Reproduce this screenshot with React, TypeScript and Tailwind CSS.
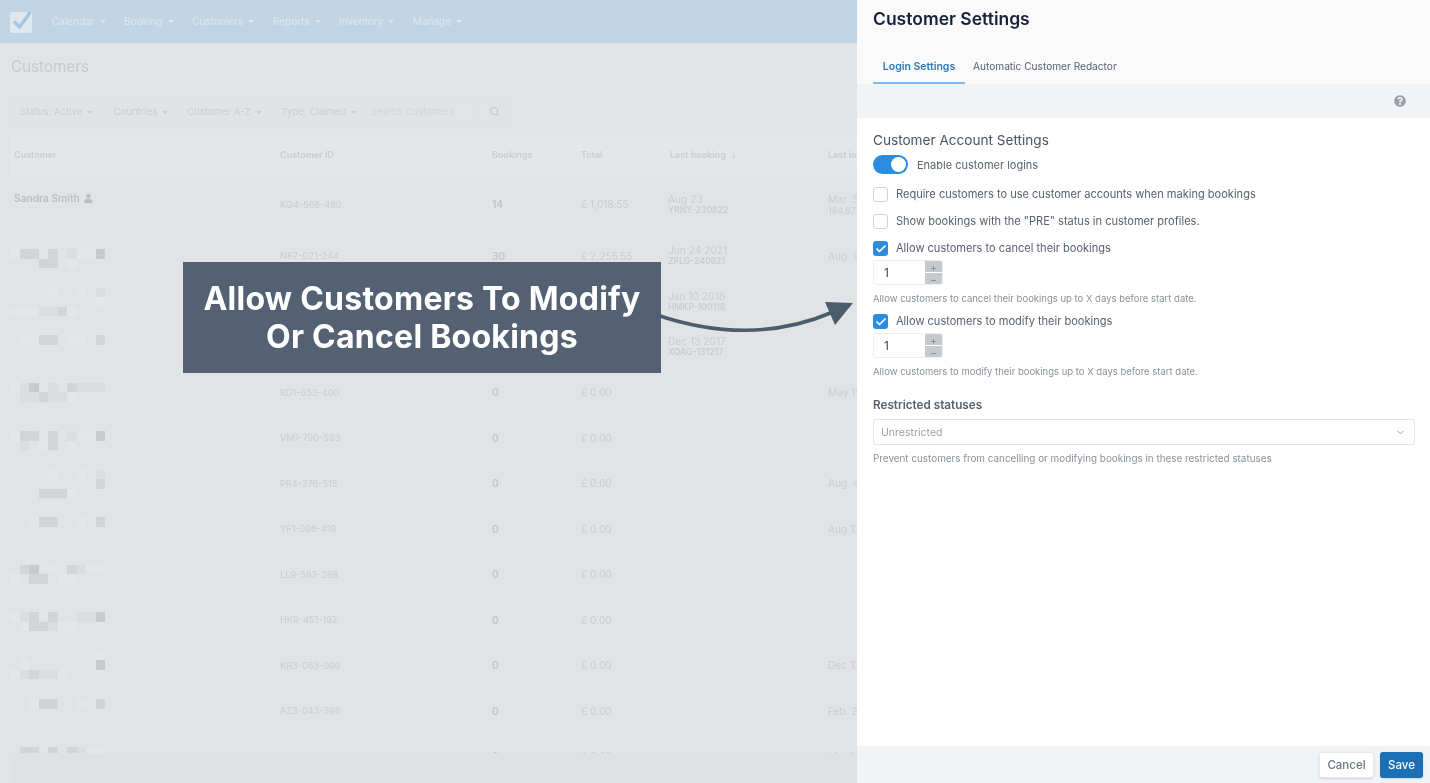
import { Search, ChevronDown, ArrowDown, Check } from 'lucide-react';
import { FaUser, FaQuestionCircle } from 'react-icons/fa';

const navItems = ['Calendar', 'Booking', 'Customers', 'Reports', 'Inventory', 'Manage'];
const filters = [
  { label: 'Status: Active', width: 'w-[90px]' },
  { label: 'Countries', width: 'w-[70px]' },
  { label: 'Customer A-Z', width: 'w-[91px]' },
  { label: 'Type: Claimed', width: 'w-[90px]' },
];

// digit = how dark the censored cell is
const shades: Record<string, string> = {
  '0': 'bg-transparent',
  '1': 'bg-[#e5e6e9]',
  '2': 'bg-[#dcdde0]',
  '3': 'bg-[#d3d4d7]',
  '4': 'bg-[#c9cacd]',
};

const rows = [
  { top: 'pt-[14px]', mask: ['1330302114', '0003301000'], id: 'NK7-021-244', count: '30', total: '£ 2,255.55', date: 'Jun 24 2021', ref: 'ZPLG-240621', login: 'Aug  9' },
  { top: 'pt-[7px]', mask: ['0000100102', '0000000001', '1112231000'], id: '', count: '', total: '', date: 'Jan 10 2018', ref: 'HMKP-100118', login: '' },
  { top: 'pt-[9px]', mask: ['0113301103'], id: '', count: '2', total: '£ 138.65', date: 'Dec 13 2017', ref: 'XQAG-131217', login: '' },
  { top: 'pt-[11px]', mask: ['1240203222', '0223221000'], id: 'RD1-653-400', count: '0', total: '£ 0.00', date: '', ref: '', login: 'May 15' },
  { top: 'pt-[14px]', mask: ['1330302114', '0201301000'], id: 'VM1-790-593', count: '0', total: '£ 0.00', date: '', ref: '', login: '' },
  { top: 'pt-[7px]', mask: ['0000100102', '0000000003', '0003331000'], id: 'PR4-376-515', count: '0', total: '£ 0.00', date: '', ref: '', login: 'Aug  4' },
  { top: 'pt-[9px]', mask: ['0013300103'], id: 'YF1-098-419', count: '0', total: '£ 0.00', date: '', ref: '', login: 'Aug 13' },
  { top: 'pt-[11px]', mask: ['0340103211', '1033011000'], id: 'LL9-583-288', count: '0', total: '£ 0.00', date: '', ref: '', login: '' },
  { top: 'pt-[13px]', mask: ['1230300224', '0133211000'], id: 'HK9-451-192', count: '0', total: '£ 0.00', date: '', ref: '', login: '' },
  { top: 'pt-[6px]', mask: ['0000000001', '0100000004', '1232210000'], id: 'KR3-063-099', count: '0', total: '£ 0.00', date: '', ref: '', login: 'Dec 13' },
  { top: 'pt-[9px]', mask: ['0013300103'], id: 'AZ3-043-396', count: '0', total: '£ 0.00', date: '', ref: '', login: 'Feb  2' },
  { top: 'pt-[11px]', mask: ['0330303211'], id: 'IX9-476-400', count: '0', total: '£ 0.00', date: '', ref: '', login: 'Mar 10' },
];

const tableCols = 'grid grid-cols-[266px_212px_89px_89px_158px_1fr] items-center pl-[4px]';

function Caret() {
  return <span className="ml-[5px] inline-block border-x-[3px] border-t-[3px] border-x-transparent border-t-current align-middle" />;
}

function Mask({ lines }: { lines: string[] }) {
  return (
    <div className="ml-[-4px] grid w-[95px] grid-cols-10">
      {lines.join('').split('').map((cell, i) => (
        <div key={i} className={`h-[9.5px] ${shades[cell]}`} />
      ))}
    </div>
  );
}

function CustomerTable() {
  return (
    <div className="flex min-h-0 flex-1 flex-col overflow-hidden pl-[10px]">
      <div className={`${tableCols} h-[40px] shrink-0 whitespace-nowrap bg-[#e4e6e8] text-[9px] font-semibold text-[#cbcdd1]`}>
        <div>Customer</div>
        <div>Customer ID</div>
        <div>Bookings</div>
        <div>Total</div>
        <div className="flex items-center gap-[3px]">
          Last booking <ArrowDown className="h-[9px] w-[9px]" />
        </div>
        <div>Last login</div>
      </div>

      <div className={`${tableCols} h-[58px] shrink-0 border-b border-[#dfe1e5] pt-[2px] text-[10.2px] text-[#cacccf]`}>
        <div className="flex items-center gap-[4px] pb-[12px] font-semibold text-[#bcbec2]">
          Sandra Smith <FaUser className="h-[9px] w-[9px]" />
        </div>
        <div className="text-[9.2px]">KQ4-566-480</div>
        <div className="font-semibold text-[#c2c4c8]">14</div>
        <div>£ 1,018.55</div>
        <div className="-ml-[2px] leading-[11px]">
          <div>Aug 23</div>
          <div className="text-[8.6px] font-semibold">YRNY-230822</div>
        </div>
        <div className="whitespace-pre leading-[11px]">
          <div>Mar  5</div>
          <div className="text-[9px]">184.67.</div>
        </div>
      </div>

      {rows.map((row, i) => (
        <div key={i} className={`${tableCols} h-[45.5px] shrink-0 border-b border-[#e0e2e6] pt-[2px] text-[10.2px] text-[#cacccf]`}>
          <div className={`h-full self-start ${row.top}`}>
            <Mask lines={row.mask} />
          </div>
          <div className="text-[9.2px]">{row.id}</div>
          <div className="font-semibold text-[#c2c4c8]">{row.count}</div>
          <div>{row.total}</div>
          <div className="-ml-[2px] leading-[11px]">
            <div>{row.date}</div>
            <div className="text-[8.6px] font-semibold">{row.ref}</div>
          </div>
          <div className="whitespace-pre">{row.login}</div>
        </div>
      ))}
    </div>
  );
}

function Background() {
  return (
    <div className="flex h-full w-[857px] shrink-0 flex-col bg-[#e2e3e5]">
      <div className="flex h-[43px] shrink-0 items-center bg-[#c1d4e3] pl-[10px] text-[10px] text-[#dfe7ef]">
        <svg viewBox="0 0 22 22" className="h-[22px] w-[22px] shrink-0">
          <rect x="0" y="1" width="22" height="21" rx="2" fill="#dfe7ef" />
          <path d="M4 10.5 L9.5 16 L20.5 1" fill="none" stroke="#a5c6e3" strokeWidth="3.4" />
        </svg>
        <div className="ml-[20px] flex gap-[18.5px]">
          {navItems.map((item) => (
            <div key={item} className="flex items-center whitespace-nowrap">
              {item}
              <Caret />
            </div>
          ))}
        </div>
      </div>

      <div className="mt-[14px] h-[19px] shrink-0 pl-[11px] text-[15.2px] leading-[19px] text-[#c6c9cd]">Customers</div>

      <div className="mt-[23px] flex h-[25px] shrink-0 gap-[3.5px] pl-[10px] text-[9.6px] text-[#cbcdd0]">
        {filters.map((filter) => (
          <div key={filter.label} className={`flex items-center rounded-[3px] border border-[#dfe0e3] pt-[1px] pl-[9px] whitespace-nowrap ${filter.width}`}>
            {filter.label}
            <Caret />
          </div>
        ))}
        <div className="flex w-[144px] rounded-[3px] border border-[#dfe0e3]">
          <div className="flex flex-1 items-center border-r border-[#dfe0e3] pt-[1px] pl-[5px] text-[#d3d5d8]">Search Customers</div>
          <div className="flex w-[28px] items-center justify-center text-[#bfc1c5]">
            <Search className="h-[11px] w-[11px]" />
          </div>
        </div>
      </div>

      <div className="mt-[11px] flex min-h-0 flex-1 flex-col">
        <CustomerTable />
        <div className="ml-[10px] h-[30px] shrink-0 bg-[#e0e1e4]" />
      </div>
    </div>
  );
}

function CheckRow({ checked, label }: { checked: boolean; label: string }) {
  return (
    <div className="flex h-[15px] items-center gap-[8px] text-[11.05px] text-[#596070]">
      {checked ? (
        <div className="flex h-[15px] w-[15px] items-center justify-center rounded-[3px] bg-[#2a8de0] text-white">
          <Check className="h-[12px] w-[12px]" strokeWidth={3.5} />
        </div>
      ) : (
        <div className="h-[15px] w-[15px] rounded-[3px] border border-[#cfd2d7] bg-white" />
      )}
      {label}
    </div>
  );
}

function DaysInput() {
  return (
    <div className="mt-[4px] flex h-[25px] w-[70px] overflow-hidden rounded-[3px] border border-[#eceef0]">
      <div className="flex flex-1 items-center pl-[10px] text-[12px] text-[#3c4453]">1</div>
      <div className="flex w-[17px] flex-col gap-px text-[10px] leading-none text-[#7f858e]">
        <div className="flex flex-1 items-center justify-center bg-[#c6c9cd]">+</div>
        <div className="flex flex-1 items-center justify-center bg-[#c6c9cd]">−</div>
      </div>
    </div>
  );
}

function SettingsPanel() {
  return (
    <div className="flex h-full w-[573px] shrink-0 flex-col bg-white">
      <div className="h-[84px] shrink-0 bg-[#fafafb] pl-[16px]">
        <div className="pt-[9px] text-[17.5px] leading-[20px] font-semibold text-[#19213a]">Customer Settings</div>
        <div className="mt-[20px] flex h-[35px]">
          <div className="flex w-[92px] items-center justify-center border-b-2 border-[#7dbce6] pt-[2px] text-[10.5px] font-semibold text-[#2a7ab8]">Login Settings</div>
          <div className="ml-[8px] flex items-center text-[10.15px] text-[#5b6270]">Automatic Customer Redactor</div>
        </div>
      </div>

      <div className="flex h-[34px] shrink-0 items-center justify-end bg-[#f2f3f5] pr-[24px] text-[#9aa0a8]">
        <FaQuestionCircle className="h-[12px] w-[12px]" />
      </div>

      <div className="min-h-0 flex-1 px-[16px] pr-[15px]">
        <div className="mt-[13px] text-[13.6px] leading-[18px] text-[#4b5363]">Customer Account Settings</div>
        <div className="mt-[6px] flex h-[19px] items-center gap-[9px] text-[11px] text-[#5b6270]">
          <div className="flex h-[19px] w-[35px] items-center justify-end rounded-full bg-[#2a8de0] pr-[2px]">
            <div className="h-[15px] w-[15px] rounded-full bg-white" />
          </div>
          <span className="pt-[1px]">Enable customer logins</span>
        </div>

        <div className="mt-[13px] flex flex-col gap-[12px]">
          <CheckRow checked={false} label="Require customers to use customer accounts when making bookings" />
          <CheckRow checked={false} label={'Show bookings with the "PRE" status in customer profiles.'} />
        </div>

        <div className="mt-[12px]">
          <CheckRow checked label="Allow customers to cancel their bookings" />
          <DaysInput />
          <div className="mt-[8px] text-[9.5px] leading-[12px] text-[#8b9099]">Allow customers to cancel their bookings up to X days before start date.</div>
        </div>

        <div className="mt-[9px]">
          <CheckRow checked label="Allow customers to modify their bookings" />
          <DaysInput />
          <div className="mt-[8px] text-[9.5px] leading-[12px] text-[#8b9099]">Allow customers to modify their bookings up to X days before start date.</div>
        </div>

        <div className="mt-[20px] text-[11.7px] leading-[14px] font-semibold text-[#596070]">Restricted statuses</div>
        <div className="mt-[7px] flex h-[26px] items-center justify-between rounded-[3px] border border-[#e4e6e9] pt-[1px] pr-[8px] pl-[7px] text-[10.5px] text-[#9a9fa7]">
          Unrestricted
          <ChevronDown className="h-[11px] w-[11px] text-[#8b9099]" />
        </div>
        <div className="mt-[7px] text-[9.9px] leading-[12px] text-[#8b9099]">Prevent customers from cancelling or modifying bookings in these restricted statuses</div>
      </div>

      <div className="flex h-[37px] shrink-0 items-start justify-end gap-[6px] bg-[#f2f3f5] pt-[6px] pr-[7px] text-[11.5px]">
        <div className="flex h-[26px] w-[55px] items-center justify-center rounded-[3px] border border-[#e6e8eb] bg-white pt-[1px] font-medium text-[#6c7380] shadow-sm">Cancel</div>
        <div className="flex h-[26px] w-[43px] items-center justify-center rounded-[3px] bg-[#1a6fb5] pt-[1px] font-medium text-white shadow-sm">Save</div>
      </div>
    </div>
  );
}

export default function App() {
  return (
    <div className="relative flex h-[783px] w-[1430px] overflow-hidden font-['Inter',sans-serif] blur-[0.35px]">
      <Background />
      <SettingsPanel />

      {/* Callout laid over the page */}
      <div className="absolute top-[262px] left-[183px] flex h-[111px] w-[478px] items-center justify-center bg-[#515e70]/[0.98] pt-[1px] text-center text-[32px] leading-[38px] font-bold tracking-[0.25px] text-white">
        <div>
          Allow Customers To Modify
          <br />
          Or Cancel Bookings
        </div>
      </div>

      <svg className="absolute top-[295px] left-[650px] h-[45px] w-[210px]" viewBox="0 0 210 45">
        <path d="M7 20 C 60 38, 120 44, 183 17" fill="none" stroke="#4c5b6e" strokeWidth="3.6" strokeLinecap="round" />
        <path d="M175 7 L203 8 L185 30 Z" fill="#4c5b6e" />
      </svg>
    </div>
  );
}
